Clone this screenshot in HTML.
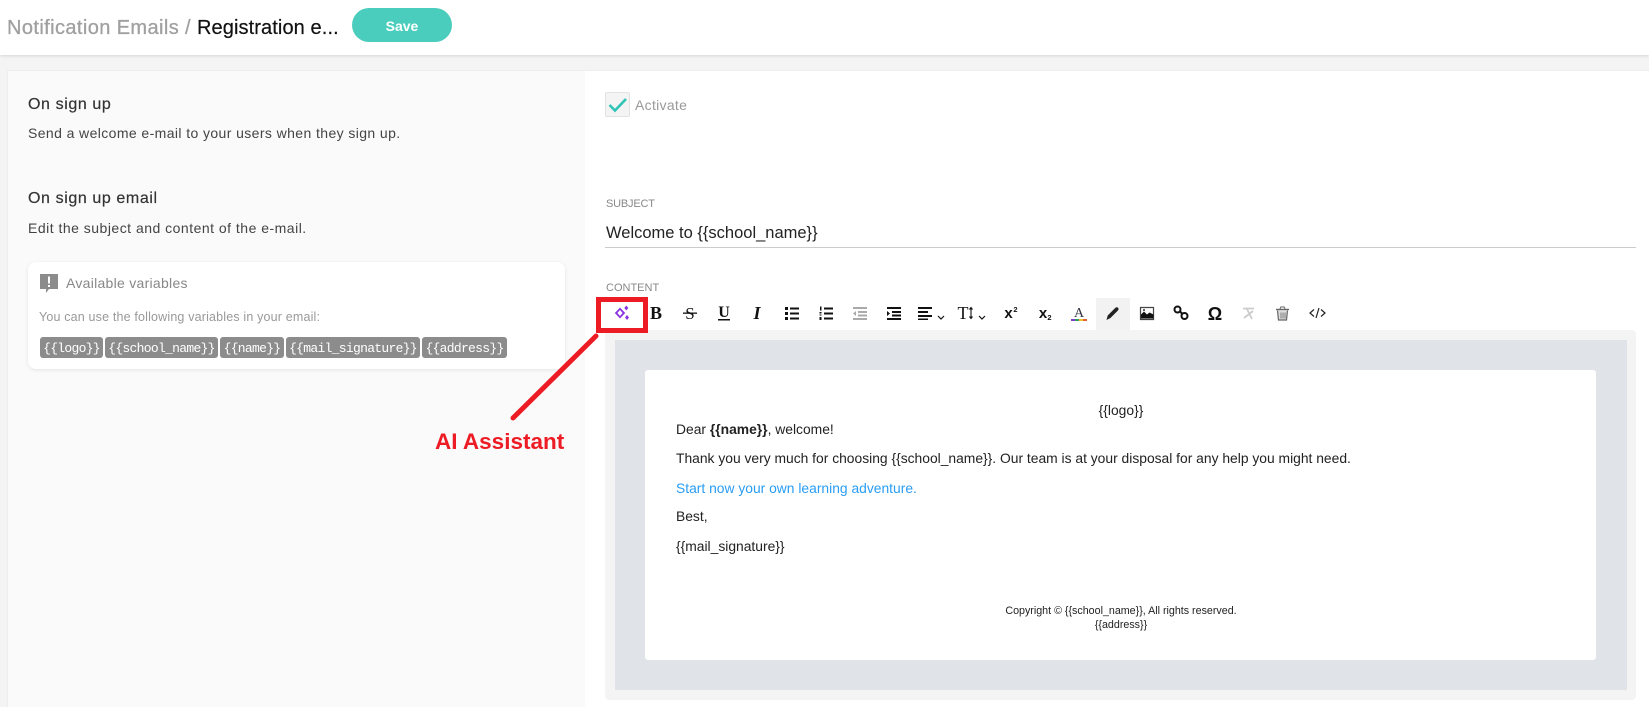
<!DOCTYPE html>
<html lang="en"><head><meta charset="utf-8"><title>Notification Emails</title>
<style>
*{box-sizing:border-box}
html,body{margin:0;padding:0;width:1649px;height:707px;overflow:hidden}
body{position:relative;background:#f4f4f4;font-family:"Liberation Sans",sans-serif;color:#333}
.a{position:absolute;white-space:nowrap}
.t{position:absolute;white-space:nowrap;line-height:20px;height:20px}
.chip{position:absolute;top:337px;height:21px;background:#8c8c8c;border-radius:3px;color:#fff;font:13px/23px "Liberation Mono",monospace;letter-spacing:-.7px;text-align:center}
.b{font-size:13.850px;color:#222}
</style></head><body>
<div class="a" style="left:0;top:0;width:1649px;height:55px;background:#fff;box-shadow:0 1px 3px rgba(0,0,0,.12)"></div>
<div class="t" style="left:7px;top:17px;font-size:20px;line-height:22px;height:22px;color:#a0a0a0;letter-spacing:.4px;-webkit-text-stroke:.3px #a0a0a0">Notification Emails / <span style="color:#111;letter-spacing:.1px;-webkit-text-stroke:.2px #111">Registration e...</span></div>
<div class="a" style="left:352px;top:8px;width:100px;height:34px;border-radius:17px;background:#4bcdbd;color:#fff;font-size:14px;font-weight:bold;line-height:36px;text-align:center">Save</div>

<div class="a" style="left:7px;top:70px;width:578px;height:637px;background:#fafafa;border:1px solid #eee;border-right:0;border-bottom:0"></div>
<div class="a" style="left:585px;top:70px;width:1064px;height:637px;background:#fff;border-top:1px solid #eee"></div>

<div class="t" style="left:28px;top:95px;font-size:16px;color:#333;letter-spacing:.6px;-webkit-text-stroke:.2px #333">On sign up</div>
<div class="t" style="left:28px;top:123px;font-size:14px;color:#444;letter-spacing:.4px">Send a welcome e-mail to your users when they sign up.</div>
<div class="t" style="left:28px;top:189px;font-size:16px;color:#333;letter-spacing:.6px;-webkit-text-stroke:.2px #333">On sign up email</div>
<div class="t" style="left:28px;top:218px;font-size:14px;color:#444;letter-spacing:.49px">Edit the subject and content of the e-mail.</div>

<div class="a" style="left:28px;top:262px;width:537px;height:107px;background:#fff;border-radius:8px;box-shadow:0 1px 4px rgba(0,0,0,.09)"></div>
<svg class="a" style="left:40px;top:274px" width="18" height="20" viewBox="0 0 18 20"><path d="M0 0H18V15H9L6 19V15H0Z" fill="#8c8c8c"/><rect x="8" y="2.500" width="2" height="7" fill="#fff"/><rect x="8" y="11" width="2" height="2" fill="#fff"/></svg>
<div class="t" style="left:66px;top:273px;font-size:14px;color:#888;letter-spacing:.28px">Available variables</div>
<div class="t" style="left:39px;top:307px;font-size:12.500px;color:#999;letter-spacing:.17px">You can use the following variables in your email:</div>
<div class="chip" style="left:40px;width:63px">{{logo}}</div>
<div class="chip" style="left:105px;width:113px">{{school_name}}</div>
<div class="chip" style="left:220px;width:64px">{{name}}</div>
<div class="chip" style="left:286px;width:134px">{{mail_signature}}</div>
<div class="chip" style="left:422px;width:85px">{{address}}</div>

<div class="a" style="left:605px;top:92px;width:25px;height:25px;background:#f4f4f4;border:1px solid #e2e2e2;border-radius:2px"></div>
<svg class="a" style="left:605px;top:92px" width="25" height="25" viewBox="0 0 25 25"><path d="M4.500 13L10 18.500L21 7" fill="none" stroke="#2fc4b5" stroke-width="2.600"/></svg>
<div class="t" style="left:635px;top:95px;font-size:14px;color:#999;letter-spacing:.3px">Activate</div>

<div class="t" style="left:606px;top:194px;font-size:11px;color:#888;letter-spacing:-.2px">SUBJECT</div>
<div class="t" style="left:606px;top:223px;font-size:16.500px;color:#222">Welcome to {{school_name}}</div>
<div class="a" style="left:605px;top:247px;width:1031px;height:1px;background:#ccc"></div>
<div class="t" style="left:606px;top:278px;font-size:11px;color:#888">CONTENT</div>

<div class="a" style="left:1096px;top:298px;width:34px;height:32px;background:#f2f2f2"></div>
<div class="a" style="left:605px;top:330px;width:1031px;height:370px;background:#f4f4f4;border-radius:4px"></div>
<div class="a" style="left:615px;top:340px;width:1012px;height:350px;background:#e0e3e8"></div>
<div class="a" style="left:645px;top:370px;width:951px;height:290px;background:#fff;border-radius:3px"></div>

<svg class="a" style="left:0;top:0" width="1649" height="340" viewBox="0 0 1649 340" font-family="Liberation Serif,serif" fill="#111">
<g fill="#8a35e0"><path d="M620 307.500L625.200 313L620 318.500L614.800 313Z M620 310L617.400 313L620 316L622.600 313Z" fill-rule="evenodd"/><path d="M626.300 305.500L628.300 308L626.300 310.500L624.300 308Z"/><path d="M627 315L629 317.500L627 320L625 317.500Z"/></g>
<text x="656" y="319" font-size="18" font-weight="bold" text-anchor="middle">B</text>
<text x="690" y="319" font-size="17" text-anchor="middle">S</text><rect x="683" y="312.500" width="14" height="1.300"/>
<text x="724" y="317" font-size="16" font-weight="bold" text-anchor="middle">U</text><rect x="718" y="319" width="12" height="1.500"/>
<text x="757" y="319" font-size="18" font-weight="bold" font-style="italic" text-anchor="middle">I</text>
<path d="M785 307h3v3h-3zM785 312h3v3h-3zM785 317h3v3h-3zM790 307.500h9v2h-9zM790 312.500h9v2h-9zM790 317.500h9v2h-9z"/>
<path d="M820 306.500h1.500v4h-1.500zM819.500 312h2v1.500h-2zM819.500 314.500h2v1h-2zM819.500 317h2v3h-2zM824 307.500h9v2h-9zM824 312.500h9v2h-9zM824 317.500h9v2h-9z"/>
<path fill="#aaa" d="M853 307h14v2h-14zM858 311h9v2h-9zM858 314.500h9v2h-9zM853 318h14v2h-14zM856 311v5l-3-2.500z"/>
<path d="M887 307h14v2h-14zM892 311h9v2h-9zM892 314.500h9v2h-9zM887 318h14v2h-14zM887 311v5l3-2.500z"/>
<path d="M918 307h14v2h-14zM918 311h10v2h-10zM918 315h14v2h-14zM918 318.500h10v1.500h-10z"/>
<path d="M938 316l3 3l3-3" fill="none" stroke="#111" stroke-width="1.200"/>
<text x="963" y="319" font-size="18" text-anchor="middle">T</text>
<path d="M971 308v10M969.500 309.500l1.500-2l1.500 2M969.500 316.500l1.500 2l1.500-2" fill="none" stroke="#111" stroke-width="1.100"/>
<path d="M979 316l3 3l3-3" fill="none" stroke="#111" stroke-width="1.200"/>
<text x="1008.500" y="318" font-family="Liberation Sans,sans-serif" font-size="15" font-weight="bold" text-anchor="middle">x</text>
<text x="1015.500" y="312" font-family="Liberation Sans,sans-serif" font-size="7.500" font-weight="bold" text-anchor="middle">2</text>
<text x="1043" y="318" font-family="Liberation Sans,sans-serif" font-size="15" font-weight="bold" text-anchor="middle">x</text>
<text x="1049.500" y="320" font-family="Liberation Sans,sans-serif" font-size="7.500" font-weight="bold" text-anchor="middle">2</text>
<text x="1079" y="317" font-size="14" text-anchor="middle" fill="#334">A</text>
<rect x="1071" y="319" width="4" height="2" fill="#7d3fd0"/><rect x="1075" y="319" width="4" height="2" fill="#2f9e5c"/><rect x="1079" y="319" width="4" height="2" fill="#e8c030"/><rect x="1083" y="319" width="4" height="2" fill="#e8632b"/>
<path d="M1106.500 320l1.200-4.500l7.500-7.500c1-1 2-1 2.800-.2s.8 1.800-.2 2.800l-7.500 7.500z" fill="#222"/>
<path d="M1140.500 307.500h13v12h-13z" fill="none" stroke="#444" stroke-width="1.200"/><path d="M1141 318.500v-4l3-3l3 3l2.500-2l4 2v4z"/><circle cx="1144" cy="310" r="1" fill="#333"/>
<g fill="none" stroke="#111" stroke-width="2"><circle cx="1177.500" cy="309.500" r="3"/><circle cx="1184.500" cy="316" r="3"/><path d="M1180 311.500l2 2"/></g>
<text x="1215" y="320" font-family="Liberation Sans,sans-serif" font-size="18" font-weight="bold" text-anchor="middle">Ω</text>
<g fill="none" stroke="#ccc" stroke-width="1.800"><path d="M1243 308.500h11M1247 309l5 10M1244 318l9-7"/></g>
<g fill="none" stroke="#666"><path d="M1276 309.500h13" stroke-width="1.400"/><path d="M1280 309l.8-2h3.500l.8 2" /><path d="M1277.500 310.500l1 9.500h8l1-9.500" fill="#ddd" stroke-width="1.200"/><path d="M1281 312.500v6M1283 312.500v6M1285 312.500v6" stroke-width=".8"/></g>
<g fill="none" stroke="#222" stroke-width="1.200"><path d="M1314 309.500l-4 3.500l4 3.500M1321 309.500l4 3.500l-4 3.500M1319 308l-3 10"/></g>
</svg>

<div class="a" style="left:596px;top:297px;width:52px;height:36px;border:5px solid #ed1c24"></div>
<svg class="a" style="left:0;top:0" width="1649" height="707" viewBox="0 0 1649 707"><path d="M596 336L513 418" stroke="#ed1c24" stroke-width="5" stroke-linecap="round"/></svg>
<div class="a" style="left:435px;top:428px;font-size:22.500px;line-height:28px;font-weight:bold;color:#ed1c24">AI Assistant</div>

<div class="t b" style="left:1021px;width:200px;text-align:center;top:400px">{{logo}}</div>
<div class="t b" style="left:676px;top:419px">Dear <b>{{name}}</b>, welcome!</div>
<div class="t b" style="left:676px;top:448px">Thank you very much for choosing {{school_name}}. Our team is at your disposal for any help you might need.</div>
<div class="t b" style="left:676px;top:478px;color:#2a9df4">Start now your own learning adventure.</div>
<div class="t b" style="left:676px;top:506px">Best,</div>
<div class="t b" style="left:676px;top:536px">{{mail_signature}}</div>
<div class="t" style="left:921px;width:400px;text-align:center;top:601px;font-size:10.700px;color:#222">Copyright © {{school_name}}, All rights reserved.</div>
<div class="t" style="left:921px;width:400px;text-align:center;top:615px;font-size:10.700px;color:#222">{{address}}</div>
</body></html>
